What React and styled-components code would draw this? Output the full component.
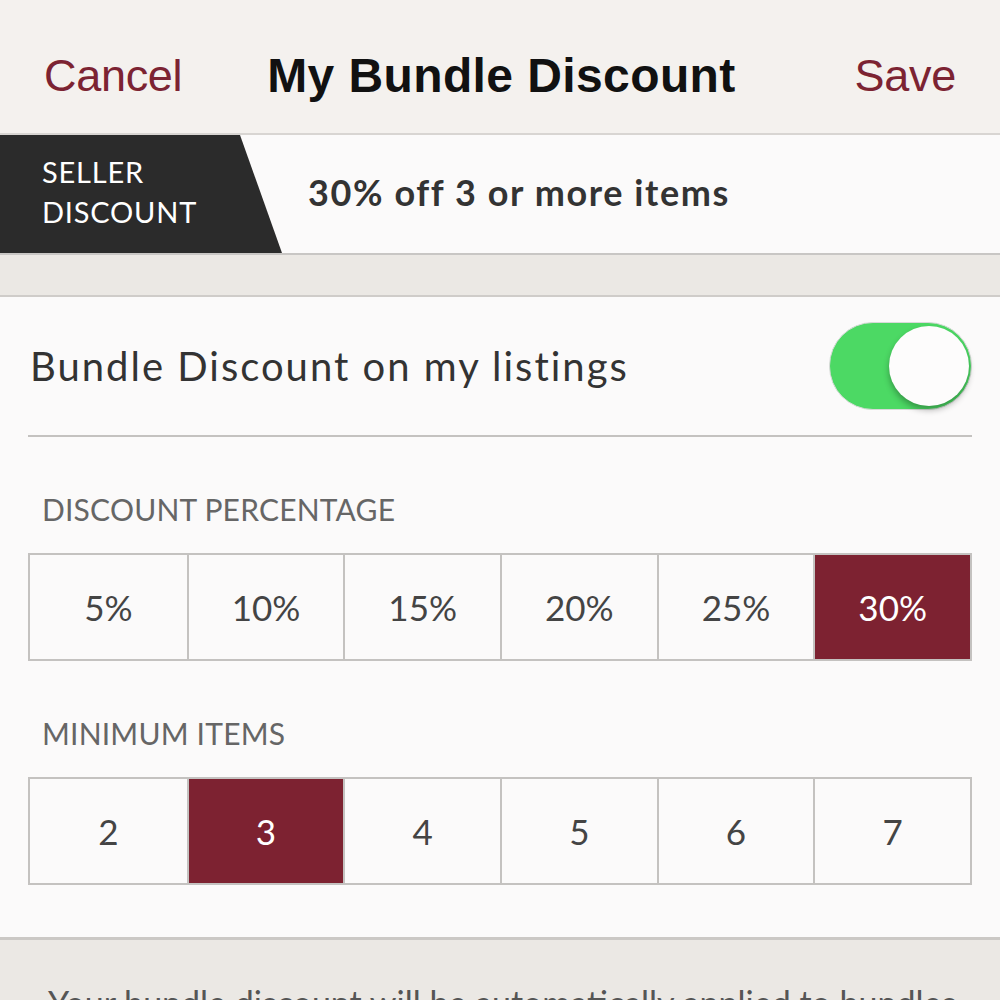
import React, { useState } from 'react';
import styled, { createGlobalStyle } from 'styled-components';

const GlobalStyle = createGlobalStyle`
    body {
        margin: 0;
        background: #ebe8e4;
        font-family: "Lato", "Noto Sans", sans-serif;
    }
`;

const percents = ['5%', '10%', '15%', '20%', '25%', '30%'];
const counts = ['2', '3', '4', '5', '6', '7'];

const App = () => {
    const [percent, setPercent] = useState('30%');
    const [count, setCount] = useState('3');
    const [enabled, setEnabled] = useState(true);

    return (
        <Page>
            <GlobalStyle />
            <NavBar>
                <NavButton>Cancel</NavButton>
                <NavTitle>My Bundle Discount</NavTitle>
                <NavButton>Save</NavButton>
            </NavBar>
            <Banner>
                <Tag>SELLER<br />DISCOUNT</Tag>
                <Summary>{percent} off {count} or more items</Summary>
            </Banner>
            <Spacer />
            <Card>
                <ToggleRow>
                    <ToggleLabel>Bundle Discount on my listings</ToggleLabel>
                    <Switch $on={enabled} onClick={() => setEnabled(!enabled)}>
                        <Knob />
                    </Switch>
                </ToggleRow>
                <Label>DISCOUNT PERCENTAGE</Label>
                <Segments>
                    {percents.map((p) => (
                        <Segment key={p} $active={p === percent} onClick={() => setPercent(p)}>{p}</Segment>
                    ))}
                </Segments>
                <Label>MINIMUM ITEMS</Label>
                <Segments>
                    {counts.map((c) => (
                        <Segment key={c} $active={c === count} onClick={() => setCount(c)}>{c}</Segment>
                    ))}
                </Segments>
            </Card>
            <Footnote>Your bundle discount will be automatically applied to bundles</Footnote>
        </Page>
    );
};

const Page = styled.div`
    width: 1000px;
    height: 1000px;
    overflow: hidden;
    background: #ebe8e4;
`;

const NavBar = styled.div`
    height: 135px;
    box-sizing: border-box;
    background: #f4f1ee;
    border-bottom: 2px solid #d8d5d2;
    display: flex;
    align-items: center;
    justify-content: space-between;
    padding: 18px 44px 0 44px;
    font-family: "Liberation Sans", Arial, sans-serif;
`;

const NavButton = styled.div`
    font-size: 45px;
    color: #7c2332;
    letter-spacing: -0.3px;
`;

const NavTitle = styled.div`
    font-size: 48px;
    font-weight: 700;
    color: #111;
    letter-spacing: 0.4px;
    margin-right: 34px;
`;

const Banner = styled.div`
    height: 118px;
    background: #fbfafa;
    border-bottom: 2px solid #c8c6c4;
    display: flex;
    align-items: center;
`;

const Tag = styled.div`
    height: 100%;
    width: 282px;
    box-sizing: border-box;
    background: #2b2b2b;
    clip-path: polygon(0 0, 240px 0, 282px 100%, 0 100%);
    color: #fff;
    font-size: 29px;
    letter-spacing: 0.8px;
    line-height: 40px;
    padding: 17px 0 0 42px;
`;

const Summary = styled.div`
    margin-left: 26px;
    font-size: 36px;
    font-weight: 700;
    letter-spacing: 1.6px;
    color: #333;
    padding-bottom: 4px;
`;

const Spacer = styled.div`
    height: 40px;
    background: #ebe8e4;
    border-bottom: 2px solid #cfccc9;
`;

const Card = styled.div`
    background: #fbfafa;
    padding: 0 28px 52px 28px;
    border-bottom: 3px solid #cbc8c5;
`;

const ToggleRow = styled.div`
    height: 138px;
    display: flex;
    align-items: center;
    justify-content: space-between;
    border-bottom: 2px solid #c4c2c0;
`;

const ToggleLabel = styled.div`
    font-size: 40px;
    letter-spacing: 2px;
    color: #333;
    margin-left: 2px;
`;

const Switch = styled.div`
    width: 143px;
    height: 88px;
    box-sizing: border-box;
    border-radius: 44px;
    background: ${(p) => (p.$on ? '#4cd964' : '#e5e5e5')};
    border: 1px solid #d9d9d9;
    display: flex;
    align-items: center;
    justify-content: ${(p) => (p.$on ? 'flex-end' : 'flex-start')};
    padding: 2px;
    cursor: pointer;
`;

const Knob = styled.div`
    width: 80px;
    height: 80px;
    border-radius: 50%;
    background: #fdfcfc;
    box-shadow: 0 4px 6px rgba(0, 0, 0, 0.3);
`;

const Label = styled.div`
    font-size: 30px;
    color: #666;
    letter-spacing: 0.2px;
    padding: 54px 0 0 14px;
    height: 62px;
`;

const Segments = styled.div`
    display: grid;
    grid-template-columns: repeat(6, 1fr);
    border: 2px solid #c4c2c0;
    height: 108px;
    box-sizing: border-box;
`;

const Segment = styled.div`
    display: flex;
    align-items: center;
    justify-content: center;
    font-size: 35px;
    color: ${(p) => (p.$active ? '#fff' : '#444')};
    background: ${(p) => (p.$active ? '#7d2231' : 'transparent')};
    border-left: 2px solid #c4c2c0;
    cursor: pointer;
    &:first-child {
        border-left: none;
    }
`;

const Footnote = styled.div`
    padding: 42px 0 0 48px;
    font-size: 34px;
    color: #555;
    white-space: nowrap;
`;

export default App;
